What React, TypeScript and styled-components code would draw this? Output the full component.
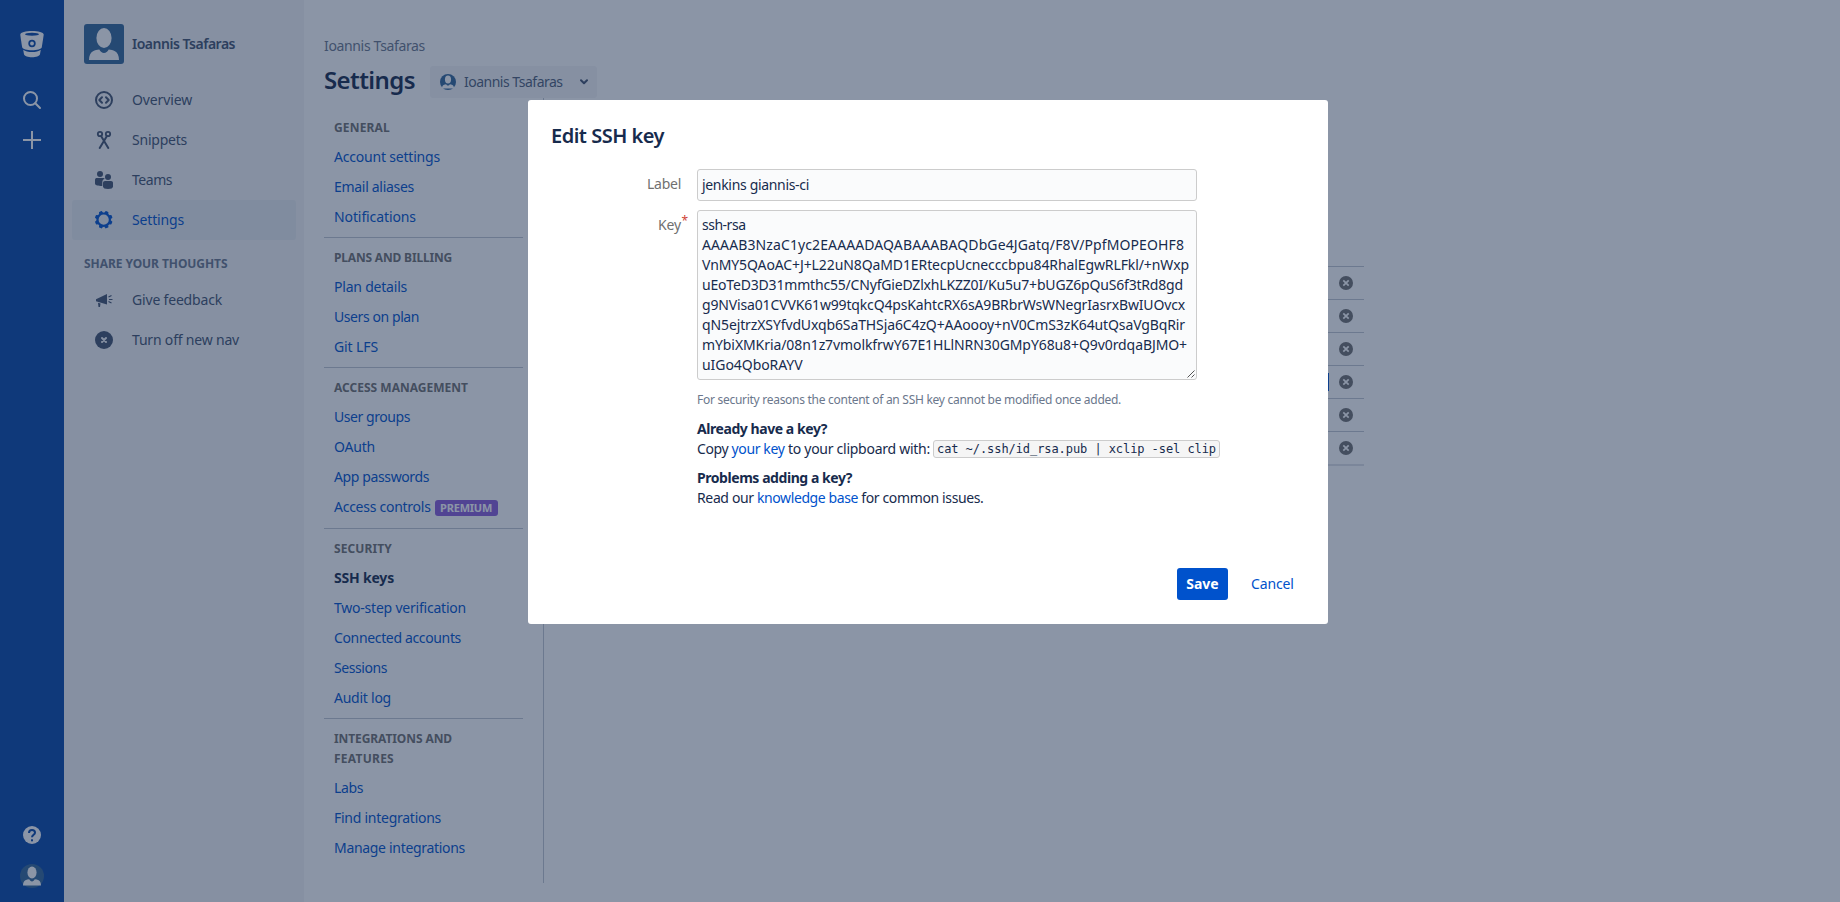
import React from "react";
import styled, { createGlobalStyle } from "styled-components";

const GlobalStyle = createGlobalStyle`
  * { box-sizing: border-box; }
  html, body { margin: 0; padding: 0; height: 100%; overflow: hidden; }
  body {
    font-family: "Noto Sans", "Open Sans", sans-serif;
    font-size: 14px;
    line-height: 20px;
    color: #172b4d;
    background: #fff;
  }
`;

const Page = styled.div`
  display: flex;
  width: 1840px;
  height: 902px;
  position: relative;
  overflow: hidden;
`;

const Text = styled.span<{ $ls?: number }>`
  letter-spacing: ${(p) => p.$ls ?? 0}px;
  white-space: pre;
`;

const Rail = styled.div`
  width: 64px;
  height: 902px;
  flex: none;
  background: #0747a6;
  display: flex;
  flex-direction: column;
  align-items: center;
  padding: 24px 0 5px;
`;
const RailSlot = styled.div<{ $gap?: number }>`
  height: 40px;
  flex: none;
  margin-bottom: ${(p) => p.$gap ?? 0}px;
  display: flex;
  align-items: center;
  justify-content: center;
  svg { display: block; }
`;
const RailSpacer = styled.div`
  flex: 1;
`;

const SideNav = styled.nav`
  width: 240px;
  flex: none;
  background: #f4f5f7;
  padding: 24px 8px 0;
  color: #42526e;
`;
const Owner = styled.div`
  display: flex;
  align-items: center;
  height: 40px;
  padding-left: 12px;
  gap: 8px;
  font-weight: 600;
  margin-bottom: 16px;
`;
const NavItem = styled.div<{ $active?: boolean }>`
  height: 40px;
  display: flex;
  align-items: center;
  padding-left: 20px;
  gap: 16px;
  border-radius: 3px;
  color: ${(p) => (p.$active ? "#0052cc" : "#42526e")};
  background: ${(p) => (p.$active ? "#e9edf0" : "transparent")};
`;
const NavIcon = styled.span`
  width: 24px;
  height: 24px;
  svg { display: block; }
`;
const NavHeading = styled.div`
  font-size: 12px;
  font-weight: 700;
  color: #6b778c;
  padding: 14px 12px 0;
  height: 40px;
`;

const Main = styled.main`
  flex: 1;
  padding: 36px 20px 0;
  min-width: 0;
`;
const Crumb = styled.div`
  color: #6b778c;
  height: 30px;
`;
const TitleRow = styled.div`
  display: flex;
  align-items: center;
  height: 32px;
  gap: 15px;
`;
const Title = styled.h1`
  margin: 0;
  width: 91px;
  font-size: 24px;
  line-height: 28px;
  font-weight: 600;
  padding-bottom: 5px;
`;
const Picker = styled.div`
  display: flex;
  align-items: center;
  width: 167px;
  height: 32px;
  padding: 0 9px 0 10px;
  border-radius: 3px;
  background: #f4f5f7;
  color: #505f79;
  gap: 8px;
  svg { display: block; }
  svg:last-child { margin-left: auto; }
`;
const Columns = styled.div`
  display: flex;
  height: 785px;
`;
const Settings = styled.div`
  width: 220px;
  border-right: 1px solid #c1c7d0;
  padding: 19px 20px 0 0;
`;
const Group = styled.section`
  padding: 0 0 5px 10px;
  border-bottom: 1px solid #c1c7d0;
  margin-bottom: 9px;
  &:last-child { border: 0; }
`;
const GroupTitle = styled.h2`
  margin: 0;
  padding: 1px 0 4px;
  font-size: 12px;
  line-height: 20px;
  font-weight: 700;
  color: #707070;
`;
const SettingLink = styled.div<{ $current?: boolean; $tall?: boolean }>`
  height: ${(p) => (p.$tall ? 31 : 30)}px;
  padding-top: 5px;
  display: flex;
  color: ${(p) => (p.$current ? "#172b4d" : "#0052cc")};
  font-weight: ${(p) => (p.$current ? 700 : 400)};
`;
const Badge = styled.span`
  width: 63px;
  height: 16px;
  margin: 3px 0 0 4px;
  border-radius: 3px;
  background: #8b5dd8;
  color: #fff;
  font-size: 11px;
  line-height: 16px;
  font-weight: 700;
  text-align: center;
`;
const KeyTable = styled.div`
  width: 800px;
  margin: 168px 0 0 20px;
  height: 200px;
  border-bottom: 2px solid #dfe1e6;
`;
const KeyRow = styled.div`
  height: 33px;
  border-top: 1px solid #c1c7d0;
  display: flex;
  align-items: center;
  justify-content: flex-end;
  padding-right: 10px;
  gap: 9px;
  svg { display: block; }
`;
const FocusBox = styled.span`
  width: 30px;
  height: 18px;
  border: 1px solid #0052cc;
`;

const Blanket = styled.div`
  position: absolute;
  inset: 0;
  background: rgba(23, 43, 77, 0.5);
  display: flex;
  justify-content: center;
  align-items: flex-start;
  padding: 100px 0 0 16px;
`;
const Dialog = styled.div`
  width: 800px;
  height: 524px;
  background: #fff;
  border-radius: 3px;
  padding: 24px 24px 24px 23px;
  display: flex;
  flex-direction: column;
`;
const DialogTitle = styled.h2`
  margin: 0;
  font-size: 20px;
  line-height: 24px;
  font-weight: 600;
  height: 45px;
`;
const Field = styled.div`
  display: flex;
  margin-bottom: 9px;
`;
const FieldLabel = styled.label`
  width: 146px;
  padding: 5px 16px 0 0;
  display: flex;
  justify-content: flex-end;
  color: #707070;
  position: relative;
`;
const Required = styled.span`
  position: absolute;
  right: 9px;
  top: 1px;
  color: #d04437;
  font-size: 12px;
`;
const Input = styled.div`
  width: 500px;
  height: 32px;
  border: 1px solid #ccc;
  border-radius: 3px;
  background: #fafbfc;
  padding: 5px 4px;
`;
const KeyArea = styled(Input)`
  height: 170px;
  padding: 4px;
  position: relative;
  span { display: block; }
  svg { position: absolute; right: 1px; bottom: 1px; }
`;
const Notes = styled.div`
  margin-left: 146px;
`;
const Hint = styled.div`
  font-size: 12px;
  color: #6b778c;
  height: 30px;
  padding-top: 1px;
`;
const Note = styled.div`
  margin-bottom: 9px;
`;
const Line = styled.div`
  display: flex;
  height: 20px;
  a { color: #0052cc; }
  strong { font-weight: 700; }
`;
const Code = styled.code`
  font-family: "DejaVu Sans Mono", monospace;
  font-size: 12px;
  line-height: 16px;
  width: 287px;
  height: 18px;
  margin: 1px 0 0 3px;
  padding: 0 3px;
  border: 1px solid #ccc;
  border-radius: 3px;
  background: #f5f5f5;
`;
const Actions = styled.div`
  margin-top: auto;
  display: flex;
  justify-content: flex-end;
  padding-right: 10px;
  gap: 23px;
`;
const SaveButton = styled.button`
  width: 51px;
  height: 32px;
  border: 0;
  border-radius: 3px;
  background: #0052cc;
  color: #fff;
  font: 700 14px/20px "Noto Sans", sans-serif;
  padding: 0;
`;
const CancelLink = styled.a`
  color: #0052cc;
  width: 43px;
  padding-top: 6px;
`;

const Person = ({ size, round }: { size: number; round?: boolean }) => (
  <svg width={size} height={size} viewBox="0 0 40 40">
    <rect width="40" height="40" rx={round ? 20 : 3} fill="#336699" />
    <ellipse cx="20" cy="14" rx="7.6" ry="10" fill="#fff" />
    <path d="M5 36c0-4.500 1.500-7.500 4-8.800C11 26.200 13 25.700 15.300 25.500 16.500 27.500 18 29 20 29s3.500-1.500 4.700-3.500c2.300.2 4.300.7 6.300 1.700 2.500 1.300 4 4.300 4 8.800z" fill="#fff" />
  </svg>
);

const BucketIcon = () => (
  <svg width="24" height="28" viewBox="0 0 24 28">
    <path d="M12 1C6 1 .3 2.300.3 4.400c0 1 1.200 8.500 1.900 12.800C2.600 19 7 20.300 12 20.300s9.400-1.300 9.800-3.100c.7-4.300 1.900-11.800 1.900-12.800C23.700 2.300 18 1 12 1zm0 1.800c4.600 0 7 .8 7 1.500s-2.400 1.400-7 1.400-7-.700-7-1.400 2.400-1.500 7-1.500zm0 7a3.700 3.700 0 1 1 0 7.400 3.700 3.700 0 0 1 0-7.400z" fill="#fff" fillRule="evenodd" />
    <circle cx="12" cy="13.500" r="1.900" fill="#fff" />
    <path d="M3.200 19.800c2 1.600 5.200 2.300 8.800 2.300s6.800-.7 8.800-2.300c-.3 1.700-.7 4-.9 4.800-.4 1.500-4 2.700-7.900 2.700s-7.500-1.200-7.900-2.700c-.2-.8-.6-3.100-.9-4.800z" fill="#fff" />
  </svg>
);
const SearchIcon = () => (
  <svg width="24" height="24" viewBox="0 0 24 24" fill="none" stroke="#fff" strokeWidth="2">
    <circle cx="10.500" cy="10.500" r="6.500" />
    <path d="M15.300 15.300L20 20" strokeLinecap="round" />
  </svg>
);
const PlusIcon = () => (
  <svg width="24" height="24" viewBox="0 0 24 24" stroke="#fff" strokeWidth="2">
    <path d="M12 3v18M3 12h18" />
  </svg>
);
const HelpIcon = () => (
  <svg width="24" height="24" viewBox="0 0 24 24" fill="none">
    <circle cx="12" cy="12" r="9" fill="#fff" />
    <path d="M9 9.900C9 8 10.200 7 12 7s3 1.100 3 2.700c0 2-3 2.200-3 4.600" stroke="#0747a6" strokeWidth="2" />
    <rect x="11" y="16.300" width="2" height="2" fill="#0747a6" />
  </svg>
);
const OverviewIcon = () => (
  <svg width="24" height="24" viewBox="0 0 24 24" fill="none" stroke="currentColor" strokeWidth="2">
    <circle cx="12" cy="12" r="8" />
    <path d="M10 9.300L7.300 12l2.700 2.700M14 9.300l2.700 2.700-2.700 2.700" strokeLinecap="round" strokeLinejoin="round" />
  </svg>
);
const SnippetsIcon = () => (
  <svg width="24" height="24" viewBox="0 0 24 24" fill="none" stroke="currentColor">
    <circle cx="8" cy="6" r="2.200" strokeWidth="1.800" />
    <circle cx="16" cy="6" r="2.200" strokeWidth="1.800" />
    <path d="M9.200 8.200L16.300 20M14.800 8.200L7.700 20" strokeWidth="2" strokeLinecap="round" />
  </svg>
);
const TeamsIcon = () => (
  <svg width="24" height="24" viewBox="0 0 24 24" fill="currentColor">
    <circle cx="8" cy="6" r="3" />
    <path d="M3 12c0-1.500.8-2 2-2h6c.9 0 1.500.3 1.700 1-1.500.3-2.400 1.400-2.400 3v4C6 18 3 17.300 3 15.500z" />
    <circle cx="16" cy="9" r="3" />
    <path d="M11 15c0-1.300.8-2 2-2h6c1.200 0 2 .7 2 2v3.500c0 1.700-2 2.500-5 2.500s-5-.8-5-2.500z" />
  </svg>
);
const GearIcon = () => {
  const teeth = [0, 45, 90, 135, 180, 225, 270, 315];
  return (
    <svg width="24" height="24" viewBox="0 0 24 24" fill="currentColor">
      <circle cx="11.700" cy="11.700" r="6.200" fill="none" stroke="currentColor" strokeWidth="2.200" />
      {teeth.map((a) => (
        <path key={a} d="M9.500 5.300l.6-2.100q.1-.4.500-.4h2.200q.4 0 .5.400l.6 2.100z" transform={`rotate(${a + 22.5} 11.700 11.700)`} />
      ))}
    </svg>
  );
};
const FeedbackIcon = () => (
  <svg width="24" height="24" viewBox="0 0 24 24" fill="currentColor">
    <path d="M4 11.200L15 6v10.500L4 13.200zM6 14.700l2.500.8-.5 3.500H6.500z" />
    <path d="M16.500 9l3-1.500M17 11.500h3.500M16.500 13.500l3 1.500" stroke="currentColor" strokeWidth="1.200" />
  </svg>
);
const CloseNavIcon = () => (
  <svg width="24" height="24" viewBox="0 0 24 24">
    <circle cx="12" cy="12" r="9" fill="currentColor" />
    <path d="M10 10l4 4M14 10l-4 4" stroke="#f4f5f7" strokeWidth="2" strokeLinecap="round" />
  </svg>
);
const RemoveIcon = () => (
  <svg width="16" height="16" viewBox="0 0 16 16">
    <circle cx="8" cy="8" r="7" fill="#707070" />
    <path d="M5.300 5.300l5.400 5.400M10.700 5.300l-5.400 5.400" stroke="#fff" strokeWidth="1.700" />
  </svg>
);
const Chevron = () => (
  <svg width="8" height="6" viewBox="0 0 8 6" fill="none" stroke="#42526e" strokeWidth="2">
    <path d="M1 1.200L4 4.200l3-3" strokeLinecap="round" strokeLinejoin="round" />
  </svg>
);
const ResizeGrip = () => (
  <svg width="8" height="8" viewBox="0 0 8 8" stroke="#555" fill="none">
    <path d="M.5 7.500l7-7M4.500 7.500l3-3" />
  </svg>
);

type Label = { t: string; ls: number };
type LinkItem = Label & { current?: boolean; premium?: boolean };

const groups: { title: Label[]; links: LinkItem[] }[] = [
  {
    title: [{ t: "GENERAL", ls: 0.17 }],
    links: [{ t: "Account settings", ls: -0.2 }, { t: "Email aliases", ls: -0.3 }, { t: "Notifications", ls: -0.1 }],
  },
  {
    title: [{ t: "PLANS AND BILLING", ls: -0.18 }],
    links: [{ t: "Plan details", ls: -0.21 }, { t: "Users on plan", ls: -0.42 }, { t: "Git LFS", ls: -0.11 }],
  },
  {
    title: [{ t: "ACCESS MANAGEMENT", ls: 0.01 }],
    links: [
      { t: "User groups", ls: -0.44 },
      { t: "OAuth", ls: -0.19 },
      { t: "App passwords", ls: -0.38 },
      { t: "Access controls", ls: -0.26, premium: true },
    ],
  },
  {
    title: [{ t: "SECURITY", ls: 0.11 }],
    links: [
      { t: "SSH keys", ls: -0.2, current: true },
      { t: "Two-step verification", ls: -0.22 },
      { t: "Connected accounts", ls: -0.35 },
      { t: "Sessions", ls: -0.43 },
      { t: "Audit log", ls: -0.25 },
    ],
  },
  {
    title: [{ t: "INTEGRATIONS AND", ls: -0.09 }, { t: "FEATURES", ls: 0.25 }],
    links: [{ t: "Labs", ls: -0.38 }, { t: "Find integrations", ls: -0.26 }, { t: "Manage integrations", ls: -0.31 }],
  },
];

const keyLines: Label[] = [
  { t: "ssh-rsa", ls: -0.489 },
  { t: "AAAAB3NzaC1yc2EAAAADAQABAAABAQDbGe4JGatq/F8V/PpfMOPEOHF8", ls: 0.107 },
  { t: "VnMY5QAoAC+J+L22uN8QaMD1ERtecpUcnecccbpu84RhalEgwRLFkl/+nWxp", ls: -0.103 },
  { t: "uEoTeD3D31mmthc55/CNyfGieDZlxhLKZZ0I/Ku5u7+bUGZ6pQuS6f3tRd8gd", ls: -0.183 },
  { t: "g9NVisa01CVVK61w99tqkcQ4psKahtcRX6sA9BRbrWsWNegrIasrxBwIUOvcx", ls: -0.153 },
  { t: "qN5ejtrzXSYfvdUxqb6SaTHSja6C4zQ+AAoooy+nV0CmS3zK64utQsaVgBqRir", ls: -0.119 },
  { t: "mYbiXMKria/08n1z7vmolkfrwY67E1HLlNRN30GMpY68u8+Q9v0rdqaBJMO+", ls: -0.087 },
  { t: "uIGo4QboRAYV", ls: -0.061 },
];

const keyRows = [{ id: 1 }, { id: 2 }, { id: 3 }, { id: 4, focused: true }, { id: 5 }, { id: 6 }];

export default function App() {
  return (
    <>
      <GlobalStyle />
      <Page>
        <Rail>
          <RailSlot $gap={16}><BucketIcon /></RailSlot>
          <RailSlot><SearchIcon /></RailSlot>
          <RailSlot><PlusIcon /></RailSlot>
          <RailSpacer />
          <RailSlot $gap={1}><HelpIcon /></RailSlot>
          <RailSlot $gap={1}><Person size={24} round /></RailSlot>
        </Rail>
        <SideNav>
          <Owner><Person size={40} /><Text $ls={-0.492}>Ioannis Tsafaras</Text></Owner>
          <NavItem><NavIcon><OverviewIcon /></NavIcon><Text $ls={-0.13}>Overview</Text></NavItem>
          <NavItem><NavIcon><SnippetsIcon /></NavIcon><Text $ls={-0.23}>Snippets</Text></NavItem>
          <NavItem><NavIcon><TeamsIcon /></NavIcon><Text $ls={-0.47}>Teams</Text></NavItem>
          <NavItem $active><NavIcon><GearIcon /></NavIcon><Text $ls={-0.16}>Settings</Text></NavItem>
          <NavHeading><Text $ls={-0.064}>SHARE YOUR THOUGHTS</Text></NavHeading>
          <NavItem><NavIcon><FeedbackIcon /></NavIcon><Text $ls={-0.18}>Give feedback</Text></NavItem>
          <NavItem><NavIcon><CloseNavIcon /></NavIcon><Text $ls={-0.19}>Turn off new nav</Text></NavItem>
        </SideNav>
        <Main>
          <Crumb><Text $ls={-0.35}>Ioannis Tsafaras</Text></Crumb>
          <TitleRow>
            <Title><Text $ls={-0.6}>Settings</Text></Title>
            <Picker><Person size={16} round /><Text $ls={-0.5}>Ioannis Tsafaras</Text><Chevron /></Picker>
          </TitleRow>
          <Columns>
            <Settings>
              {groups.map((g) => (
                <Group key={g.title[0].t}>
                  <GroupTitle>
                    {g.title.map((x) => <div key={x.t}><Text $ls={x.ls}>{x.t}</Text></div>)}
                  </GroupTitle>
                  {g.links.map((l) => (
                    <SettingLink key={l.t} $current={l.current} $tall={l.premium}>
                      <Text $ls={l.ls}>{l.t}</Text>
                      {l.premium && <Badge><Text $ls={-0.22}>PREMIUM</Text></Badge>}
                    </SettingLink>
                  ))}
                </Group>
              ))}
            </Settings>
            <KeyTable>
              {keyRows.map((r) => (
                <KeyRow key={r.id}>{r.focused && <FocusBox />}<RemoveIcon /></KeyRow>
              ))}
            </KeyTable>
          </Columns>
        </Main>
        <Blanket>
          <Dialog>
            <DialogTitle><Text $ls={-0.5}>Edit SSH key</Text></DialogTitle>
            <Field>
              <FieldLabel><Text $ls={-0.26}>Label</Text></FieldLabel>
              <Input><Text $ls={-0.322}>jenkins giannis-ci</Text></Input>
            </Field>
            <Field>
              <FieldLabel><Text $ls={-0.15}>Key</Text><Required>*</Required></FieldLabel>
              <KeyArea>
                {keyLines.map((l) => <Text key={l.t} $ls={l.ls}>{l.t}</Text>)}
                <ResizeGrip />
              </KeyArea>
            </Field>
            <Notes>
              <Hint>
                <Text $ls={-0.279}>For security reasons the content of an SSH key cannot be modified once added.</Text>
              </Hint>
              <Note>
                <Line><strong><Text $ls={-0.436}>Already have a key?</Text></strong></Line>
                <Line>
                  <Text $ls={-0.388}>{"Copy "}</Text>
                  <a><Text $ls={-0.365}>your key</Text></a>
                  <Text $ls={-0.263}>{" to your clipboard with:"}</Text>
                  <Code><Text $ls={-0.071}>cat ~/.ssh/id_rsa.pub | xclip -sel clip</Text></Code>
                </Line>
              </Note>
              <Note>
                <Line><strong><Text $ls={-0.442}>Problems adding a key?</Text></strong></Line>
                <Line>
                  <Text $ls={-0.363}>{"Read our "}</Text>
                  <a><Text $ls={-0.404}>knowledge base</Text></a>
                  <Text $ls={-0.369}>{" for common issues."}</Text>
                </Line>
              </Note>
            </Notes>
            <Actions>
              <SaveButton><Text $ls={0}>Save</Text></SaveButton>
              <CancelLink><Text $ls={-0.15}>Cancel</Text></CancelLink>
            </Actions>
          </Dialog>
        </Blanket>
      </Page>
    </>
  );
}
